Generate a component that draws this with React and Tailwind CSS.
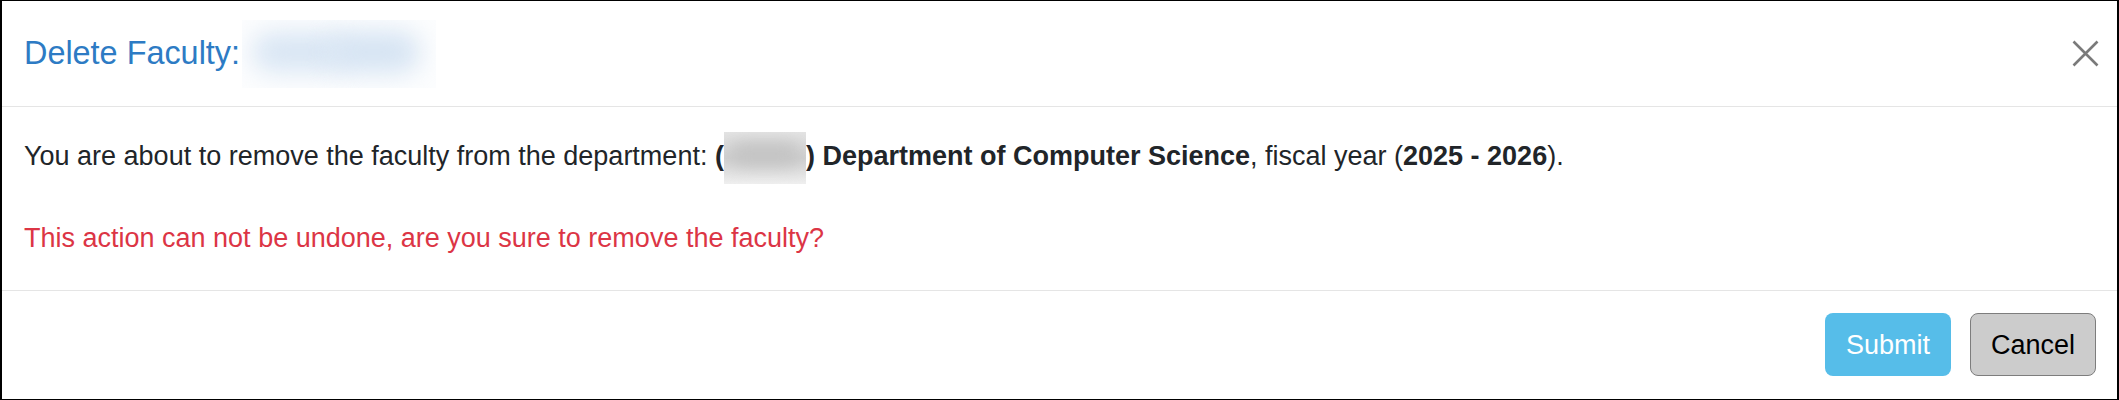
export default function App() {
  return (
    <div className="w-[2119px] h-[400px] bg-white border-x-2 border-y border-black flex flex-col font-['Liberation_Sans',Arial,sans-serif]">
      <div className="h-[106px] shrink-0 flex items-center justify-between pl-[22px] pr-[18px] border-b border-[#e5e5e5]">
        <div className="flex items-center">
          <h4 className="text-[32.4px] leading-[1.15] text-[#2d7bc4] font-normal">Delete Faculty:</h4>
          <span className="relative ml-[2px] w-[194px] h-[68px] overflow-hidden bg-[#fcfdfe]">
            <span className="absolute left-[10px] top-[12px] w-[96px] h-[40px] rounded-full bg-[#d9e6f4] blur-[12px]"></span>
            <span className="absolute left-[86px] top-[11px] w-[92px] h-[42px] rounded-full bg-[#d6e4f3] blur-[12px]"></span>
          </span>
        </div>
        <button className="w-[27px] h-[27px] flex items-center justify-center" aria-label="Close">
          <svg width="27" height="27" viewBox="0 0 27 27" fill="none">
            <path d="M1.5 1.5 L25.5 25.5 M25.5 1.5 L1.5 25.5" stroke="#7a7a7a" strokeWidth="2.6" strokeLinecap="butt" />
          </svg>
        </button>
      </div>
      <div className="shrink-0 pt-[29px] pb-[31.5px] px-[22px] text-[27px] leading-[40.5px] text-[#212529] border-b border-[#e5e5e5]">
        <p>
          You are about to remove the faculty from the department: <b className="font-bold">(</b>
          <span className="relative inline-block align-middle -my-[6px] w-[82px] h-[52px] overflow-hidden bg-gradient-to-b from-[#e4e4e4] via-[#d0d0d0] to-[#efefef]">
            <span className="absolute left-[6px] top-[10px] w-[70px] h-[24px] rounded-full bg-[#c4c4c4] blur-[8px]"></span>
          </span>
          <b className="font-bold">) Department of Computer Science</b>, fiscal year (<b className="font-bold">2025 - 2026</b>).
        </p>
        <p className="mt-[40.5px] text-[#dc3545]">This action can not be undone, are you sure to remove the faculty?</p>
      </div>
      <div className="flex-1 flex justify-end items-start gap-[19px] pt-[22px] pr-[21px]">
        <button className="w-[126px] h-[63px] rounded-[8px] bg-[#56bde9] text-white text-[27px]">Submit</button>
        <button className="w-[126px] h-[63px] rounded-[8px] bg-[#cccccc] border border-[#7d7d7d] text-black text-[27px]">Cancel</button>
      </div>
    </div>
  );
}
